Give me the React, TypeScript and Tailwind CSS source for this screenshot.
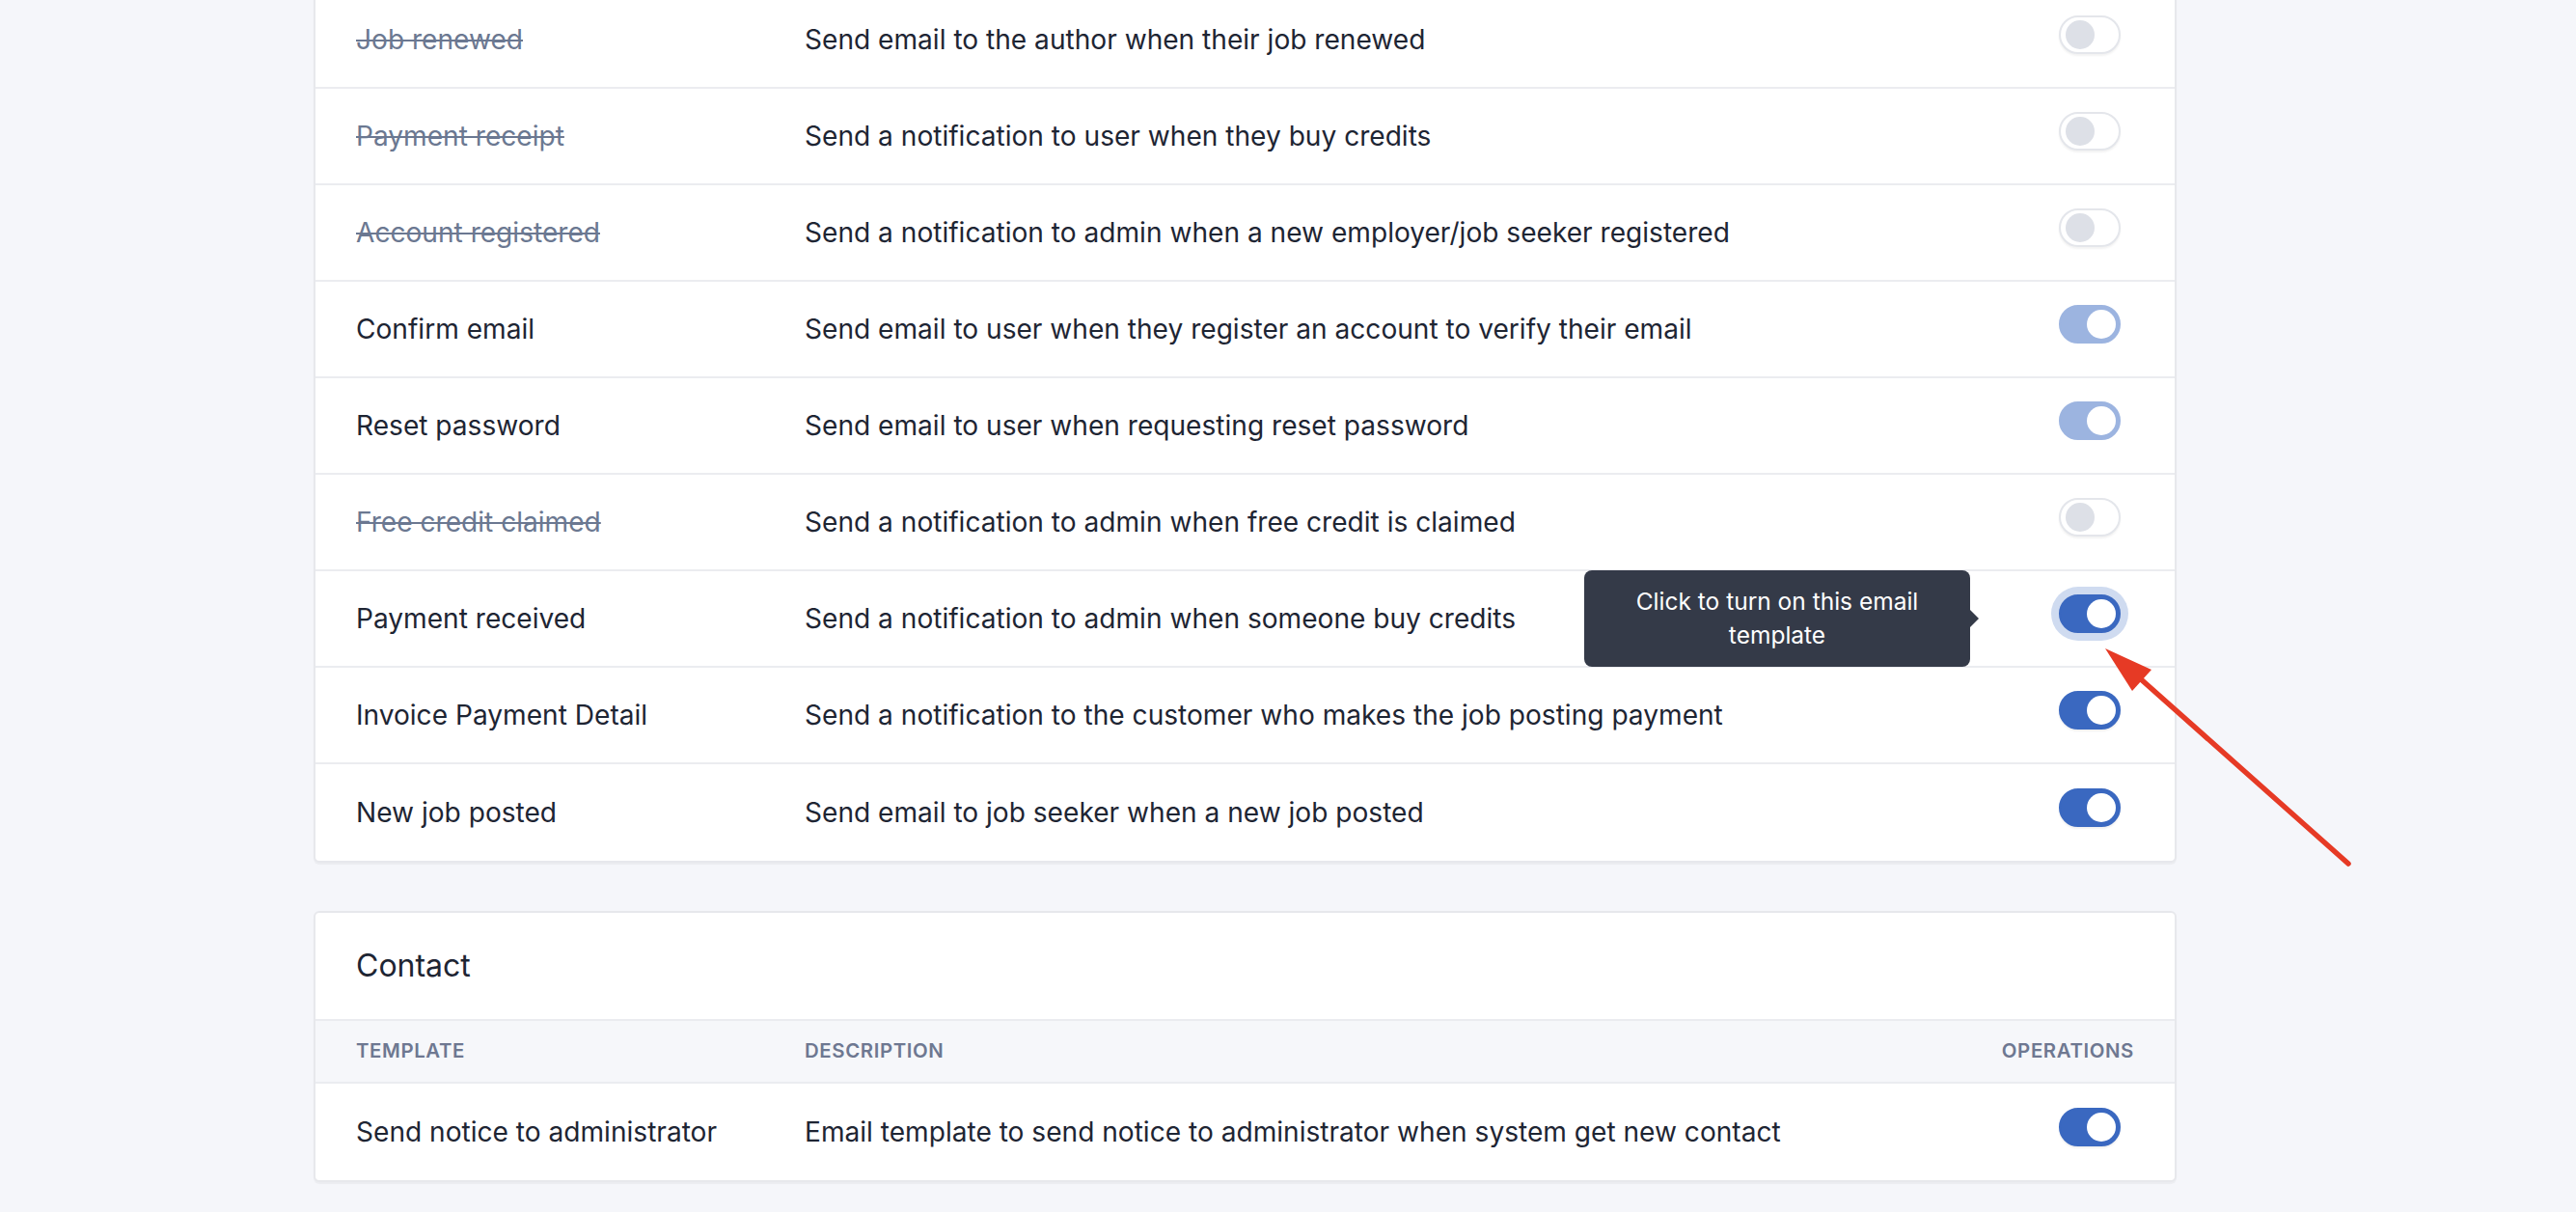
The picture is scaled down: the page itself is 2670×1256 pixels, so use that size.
import React from 'react';

type ToggleState = 'off' | 'on' | 'faded' | 'focus';

interface TemplateRow {
  name: string;
  description: string;
  disabled?: boolean;
  toggle: ToggleState;
  tooltip?: string;
}

const ROWS: TemplateRow[] = [
  { name: 'Job renewed', description: 'Send email to the author when their job renewed', disabled: true, toggle: 'off' },
  { name: 'Payment receipt', description: 'Send a notification to user when they buy credits', disabled: true, toggle: 'off' },
  {
    name: 'Account registered',
    description: 'Send a notification to admin when a new employer/job seeker registered',
    disabled: true,
    toggle: 'off',
  },
  { name: 'Confirm email', description: 'Send email to user when they register an account to verify their email', toggle: 'faded' },
  { name: 'Reset password', description: 'Send email to user when requesting reset password', toggle: 'faded' },
  { name: 'Free credit claimed', description: 'Send a notification to admin when free credit is claimed', disabled: true, toggle: 'off' },
  {
    name: 'Payment received',
    description: 'Send a notification to admin when someone buy credits',
    toggle: 'focus',
    tooltip: 'Click to turn on this email template',
  },
  { name: 'Invoice Payment Detail', description: 'Send a notification to the customer who makes the job posting payment', toggle: 'on' },
  { name: 'New job posted', description: 'Send email to job seeker when a new job posted', toggle: 'on' },
];

function Toggle({ state }: { state: ToggleState }) {
  const isOn = state !== 'off';

  // Track colour per state
  const track =
    state === 'off'
      ? 'bg-white border-[#e4e6eb] justify-start shadow-[0_2px_2px_rgba(0,0,0,0.05)]'
      : state === 'faded'
        ? 'bg-[#9cb4e0] border-[#9cb4e0] justify-end'
        : 'bg-[#3a68c0] border-[#3a68c0] justify-end shadow-[0_2px_2px_rgba(0,0,0,0.06)]';

  return (
    <div
      className={`flex items-center w-[64px] h-[40px] rounded-full border-2 px-[3px] ${track} ${
        state === 'focus' ? 'ring-[8px] ring-[#cfdbf0]' : ''
      }`}
    >
      <span className={`block w-[30px] h-[30px] rounded-full ${isOn ? 'bg-white' : 'bg-[#dde0e7] ml-[2px]'}`} />
    </div>
  );
}

function Row({ row, last }: { row: TemplateRow; last?: boolean }) {
  return (
    <div className={`flex items-center h-[100px] ${last ? '' : 'border-b-2 border-[#ebecf0]'}`}>
      <div className="w-[507px] shrink-0 pl-[42px]">
        <span className={row.disabled ? 'line-through text-[#6b7891]' : 'text-[#1e2533]'}>{row.name}</span>
      </div>
      <div className="flex-1 text-[#1e2533]">{row.description}</div>
      <div className="pr-[56px] mb-[10px]">
        <div className="relative">
          <Toggle state={row.toggle} />
          {row.tooltip && (
            <div className="absolute right-[156px] top-[calc(50%+5px)] -translate-y-1/2 w-[400px] h-[100px] flex items-center justify-center px-[30px] rounded-[8px] bg-[#343a48] text-white text-center text-[24.5px] leading-[35px]">
              {row.tooltip}
              <span className="absolute -right-[9px] top-1/2 -translate-y-1/2 w-0 h-0 border-y-[10px] border-y-transparent border-l-[10px] border-l-[#343a48]" />
            </div>
          )}
        </div>
      </div>
    </div>
  );
}

export default function App() {
  return (
    <div
      className="relative w-[2670px] h-[1256px] overflow-hidden bg-[#f5f6fa] text-[28.1px]"
      style={{ fontFamily: 'Inter, "Noto Sans", sans-serif' }}
    >
      <div className="ml-[325px] w-[1931px]">
        {/* Templates card, scrolled so the first row is partly hidden */}
        <div className="mt-[-10px] bg-white border-2 border-[#e7e8ec] rounded-[6px] shadow-[0_2px_1px_rgba(0,0,0,0.04)]">
          {ROWS.map((row, i) => (
            <Row key={row.name} row={row} last={i === ROWS.length - 1} />
          ))}
        </div>

        {/* Contact card */}
        <div className="mt-[50px] bg-white border-2 border-[#e7e8ec] rounded-[6px] shadow-[0_2px_1px_rgba(0,0,0,0.04)]">
          <div className="h-[112px] flex items-center pl-[42px] text-[32px] text-[#1e2533] border-b-2 border-[#ebecf0]">
            Contact
          </div>
          <div className="h-[65px] flex items-center bg-[#f6f7fa] border-b-2 border-[#ebecf0] text-[20.4px] font-semibold tracking-[0.03em] text-[#6e7891] uppercase">
            <div className="w-[507px] shrink-0 pl-[42px]">Template</div>
            <div className="flex-1">Description</div>
            <div className="pr-[42px]">Operations</div>
          </div>
          <Row
            last
            row={{
              name: 'Send notice to administrator',
              description: 'Email template to send notice to administrator when system get new contact',
              toggle: 'on',
            }}
          />
        </div>
      </div>

      {/* Red annotation arrow */}
      <svg className="absolute left-0 top-0 pointer-events-none" width="2670" height="1256" viewBox="0 0 2670 1256">
        <line x1="2434" y1="895" x2="2218" y2="703" stroke="#e63a25" strokeWidth="5.5" strokeLinecap="round" />
        <polygon points="2182,672 2230,694 2210,716" fill="#e63a25" />
      </svg>
    </div>
  );
}
